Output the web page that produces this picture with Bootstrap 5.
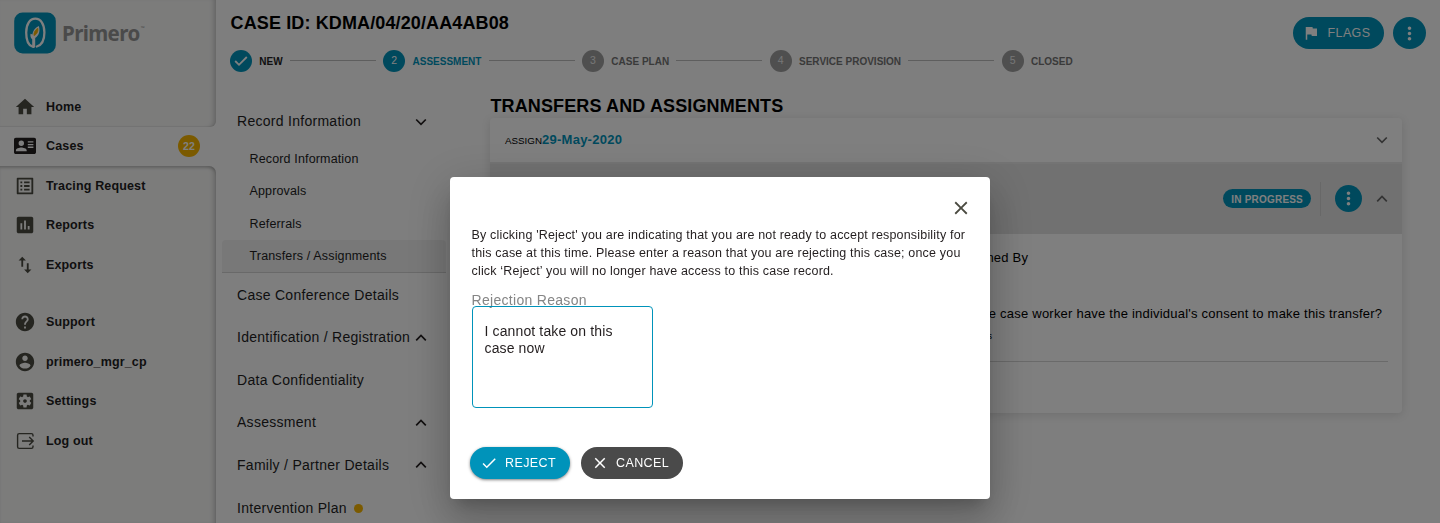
<!DOCTYPE html>
<html lang="en">
<head>
<meta charset="utf-8">
<meta name="viewport" content="width=device-width, initial-scale=1">
<title>Primero - Transfers and Assignments</title>
<link href="https://cdn.jsdelivr.net/npm/bootstrap@5.3.0/dist/css/bootstrap.min.css" rel="stylesheet">
<style>
  :root { --brand: #0093ba; }
  html, body { height: 100%; }
  body { font-family: "Liberation Sans", Arial, sans-serif; background: #fcfcfc; color: #000; overflow: hidden; }
  svg { display: block; flex: none; }
  .ln { fill: none; stroke: currentColor; }

  /* side navigation */
  .side { width: 216px; background: #fdfdfd; font-size: 12.5px; font-weight: 700; letter-spacing: .15px; color: #231e1f; }
  .side-panel { background: #f8f8f7; box-shadow: inset -5px 0 5px -3px rgba(0,0,0,.2); }
  .side-top { height: 127px; border-bottom-right-radius: 6px; box-shadow: inset -5px 0 5px -3px rgba(0,0,0,.2), inset 0 -1px 1px rgba(0,0,0,.06); }
  .side-rest { border-top-right-radius: 7px; box-shadow: inset -5px 0 5px -3px rgba(0,0,0,.2), inset 0 3px 3px -1px rgba(0,0,0,.2); }
  .side-row { height: 39.6px; padding-left: 14px; line-height: 18px; }
  .side-row svg { width: 22px; height: 22px; fill: #4a4a40; color: #4a4a40; margin-right: 10px; }
  .side-cases { height: 39px; padding-bottom: 1px; }
  .brand { padding: 12px 0 0 14px; height: 87px; }
  .brand-word { font: 700 20.5px/42px "Noto Sans", sans-serif; color: #949494; letter-spacing: -.6px; margin-left: 6px; }
  .brand-word sup { font-size: 5px; top: -2.2em; letter-spacing: 0; margin-left: 1px; }
  .count { width: 22px; height: 22px; background: #f7b500; color: #fff; font-size: 10.5px; margin-right: 16px; }

  /* record header */
  .case-title { font-size: 18px; line-height: 22px; letter-spacing: .12px; padding-left: .6px; }
  .steps { gap: 7.3px; font-size: 10px; font-weight: 700; color: #757575; height: 22px; }
  .step-dot { width: 22px; height: 22px; background: #9e9e9e; color: #ededed; font-weight: 400; font-size: 10.5px; flex: none; padding-top: 1px; }
  .step-dot.on { background: var(--brand); color: #fff; }
  .step-line { width: 86px; height: 1px; background: #bdbdbd; }
  .step-name { padding-top: 2px; white-space: nowrap; }
  .pill { background: var(--brand); color: #fff; border-radius: 16px; height: 32px; font-size: 12.5px; letter-spacing: .4px; line-height: 32px; }
  .dots { background: var(--brand); }
  .dots-lg { width: 33px; height: 32px; }
  .dots-sm { width: 27px; height: 27px; }

  /* form navigation */
  .forms { width: 224px; margin-left: 6px; padding-top: 11.5px; font-size: 14px; letter-spacing: .28px; color: #231e1f; }
  .form-row { height: 42.6px; padding: 0 19px 0 15px; white-space: nowrap; }
  .sub-row { height: 32.4px; padding-left: 27.5px; font-size: 12.5px; letter-spacing: .15px; }
  .sub-row.sel { background: #f0f0f0; border-bottom: 1px solid #d2d2d2; border-radius: 4px 4px 0 0; height: 33px; margin-bottom: .5px; }
  .alert-dot { width: 9px; height: 9px; background: #f7b500; margin-left: 7px; }

  /* transitions */
  .content-col { width: 912px; margin-left: 44px; }
  .section-title { font-size: 18px; line-height: 22px; letter-spacing: .13px; margin-top: 5.5px; height: 23.5px; padding-left: .4px; white-space: nowrap; }
  .panels { box-shadow: 0 2px 10px rgba(0,0,0,.12); border-radius: 4px; background: #fff; }
  .panel-a { height: 43.5px; padding: 0 14px 0 15px; font-size: 9.8px; }
  .panel-a b { font-size: 13px; letter-spacing: .25px; color: var(--brand); }
  .panel-h { height: 72px; background: #e2e2e2; padding: 0 14px 0 15px; border-top: 2px solid #e8e8e8; }
  .chip { background: var(--brand); color: #fff; height: 19px; border-radius: 10px; font-size: 10px; letter-spacing: .2px; font-weight: 700; padding: 1px 8px 0; }
  .v-rule { width: 1px; height: 34px; background: #d0d0d0; margin: 0 14px 0 9px; }
  .panel-b { height: 179px; padding: 15px 14px 0 15px; font-size: 13px; line-height: 18px; letter-spacing: .22px; }
  .panel-b .shift { padding-left: 7px; }
  .question { margin-left: -4px; white-space: nowrap; }
  .answer { font-size: 8.5px; margin-left: 17px; line-height: 26px; }
  .panel-b hr { border-top: 1px solid #d4d4d4; opacity: 1; margin: 12px 0 0; }

  /* reject dialog */
  .modal-dialog { width: 540px; max-width: 540px; margin: 177px 0 0 450px; }
  .modal-content { height: 322px; border: 0; border-radius: 4px; padding: 20px 18px 20px 21.5px; color: #231e1f;
    box-shadow: 0 11px 15px -7px rgba(0,0,0,.2), 0 24px 38px 3px rgba(0,0,0,.14), 0 9px 46px 8px rgba(0,0,0,.12); }
  .dialog-text { font-size: 12.5px; line-height: 18px; letter-spacing: .18px; white-space: nowrap; margin-top: 7px; }
  .reason-label { font-size: 14px; letter-spacing: .3px; line-height: 16px; color: #858585; margin-top: 12px; height: 14px; }
  .reason { width: 181px; height: 102px; border: 1px solid var(--brand); border-radius: 4px; padding: 16px 10px 16px 12px; font-size: 14px; line-height: 17px; letter-spacing: .13px; resize: none; color: #231e1f; background: transparent; }
  .act-reject { width: 100px; box-shadow: 0 1px 3px rgba(0,0,0,.5); }
  .act-cancel { width: 102px; background: #4a4a4a; }
  .actions { margin: 39px 0 0 -1.5px; gap: 11px; }
</style>
</head>
<body>
<svg class="d-none">
  <symbol id="dots" viewBox="0 0 24 24"><path fill="#fff" d="M12 8c1.100 0 2-.9 2-2s-.9-2-2-2-2 .9-2 2 .9 2 2 2zm0 2c-1.100 0-2 .9-2 2s.9 2 2 2 2-.9 2-2-.9-2-2-2zm0 6c-1.100 0-2 .9-2 2s.9 2 2 2 2-.9 2-2-.9-2-2-2z"/></symbol>
  <symbol id="up" viewBox="0 0 12 8"><path class="ln" stroke-width="1.700" d="M1.200 6.300 6 1.500l4.800 4.800"/></symbol>
  <symbol id="down" viewBox="0 0 12 8"><path class="ln" stroke-width="1.700" d="M1.200 1.500 6 6.300l4.800-4.800"/></symbol>
</svg>

<div class="d-flex h-100">
  <nav class="side d-flex flex-column h-100">
    <div class="side-panel side-top">
      <div class="brand d-flex">
        <svg width="42" height="42" viewBox="0 0 42 42"><rect x=".2" y=".5" width="41.600" height="41" rx="8.500" fill="#0093ba"/>
          <path d="M18.300 34.500C13.800 33 12.200 27.500 12.200 20.500 12.200 12 16 6.700 21.300 6.700S30.400 12 30.400 20.500c0 7.500-2.600 12.500-7.600 14" fill="none" stroke="#fff" stroke-width="2.300" stroke-linecap="round"/>
          <path d="M18.200 35.500v-8.300c-1.600-1.200-2-3.200-1.700-5.500l2 .9c.2-3.800 2.700-7 6.300-8.600 1.700 4.800.2 9.800-3.600 12v8.700c-.5 1.200-2 1.700-3 .8z" fill="#fff"/>
          <path d="M20 23.600c-.4-3 1-5.600 3.800-7.300.6 3.200-.8 6-3.800 7.300z" fill="#f7b500" stroke="#f7b500" stroke-width=".8"/></svg>
        <span class="brand-word">Primero<sup>™</sup></span>
      </div>
      <div class="side-row d-flex align-items-center"><svg viewBox="0 0 24 24"><path d="M10 20v-6h4v6h5v-8h3L12 3 2 12h3v8z"/></svg>Home</div>
    </div>
    <div class="side-row side-cases d-flex align-items-center">
      <svg viewBox="0 0 22 22" style="fill:#231e1f"><path fill-rule="evenodd" d="M1.800 2.800h18.400c1 0 1.800.8 1.800 1.800v12.700c0 1-.8 1.800-1.800 1.800H1.800c-1 0-1.800-.8-1.800-1.800V4.600c0-1 .8-1.800 1.800-1.800zM7.300 5.500a2.700 2.700 0 1 0 0 5.400 2.700 2.700 0 0 0 0-5.400zM1.900 16.300h10.800v-.9c0-1.800-3.600-2.800-5.400-2.800s-5.400 1-5.400 2.800zM13.800 6.200v1.400h5.600V6.200zm0 2.700v1.400h5.600V8.900zm0 2.700V13h5.600v-1.400z"/></svg>
      Cases<span class="count rounded-circle d-flex align-items-center justify-content-center ms-auto">22</span>
    </div>
    <div class="side-panel side-rest flex-grow-1">
      <div class="side-row d-flex align-items-center"><svg viewBox="0 0 24 24"><path d="M19 5v14H5V5h14m1.100-2H3.900c-.5 0-.9.4-.9.9v16.200c0 .4.4.9.9.9h16.200c.4 0 .9-.5.9-.9V3.900c0-.5-.5-.9-.9-.9zM11 7h6v2h-6V7zm0 4h6v2h-6v-2zm0 4h6v2h-6zM7 7h2v2H7zm0 4h2v2H7zm0 4h2v2H7z"/></svg>Tracing Request</div>
      <div class="side-row d-flex align-items-center"><svg viewBox="0 0 24 24"><path d="M19 3H5c-1.100 0-2 .9-2 2v14c0 1.100.9 2 2 2h14c1.100 0 2-.9 2-2V5c0-1.100-.9-2-2-2zM9 17H7v-7h2v7zm4 0h-2V7h2v10zm4 0h-2v-4h2v4z"/></svg>Reports</div>
      <div class="side-row d-flex align-items-center"><svg viewBox="0 0 24 24"><path d="M16 17.010V10h-2v7.010h-3L15 21l4-3.990h-3zM9 3L5 6.990h3V14h2V6.990h3L9 3z"/></svg>Exports</div>
      <div class="side-row d-flex align-items-center" style="margin-top:17.500px"><svg viewBox="0 0 24 24"><path d="M12 2C6.480 2 2 6.480 2 12s4.480 10 10 10 10-4.480 10-10S17.520 2 12 2zm1 17h-2v-2h2v2zm2.070-7.750l-.9.920C13.450 12.900 13 13.500 13 15h-2v-.5c0-1.100.45-2.100 1.170-2.830l1.240-1.260c.37-.36.59-.86.59-1.410 0-1.100-.9-2-2-2s-2 .9-2 2H8c0-2.210 1.790-4 4-4s4 1.790 4 4c0 .88-.36 1.680-.93 2.250z"/></svg>Support</div>
      <div class="side-row d-flex align-items-center"><svg viewBox="0 0 24 24"><path d="M12 2C6.480 2 2 6.480 2 12s4.480 10 10 10 10-4.480 10-10S17.520 2 12 2zm0 3c1.660 0 3 1.340 3 3s-1.340 3-3 3-3-1.340-3-3 1.340-3 3-3zm0 14.200c-2.500 0-4.710-1.280-6-3.220.03-1.990 4-3.080 6-3.080 1.990 0 5.970 1.090 6 3.080-1.290 1.940-3.500 3.220-6 3.220z"/></svg>primero_mgr_cp</div>
      <div class="side-row d-flex align-items-center"><svg viewBox="0 0 24 24"><path d="M12 10c-1.100 0-2 .9-2 2s.9 2 2 2 2-.9 2-2-.9-2-2-2zm7-7H5c-1.110 0-2 .9-2 2v14c0 1.100.89 2 2 2h14c1.110 0 2-.9 2-2V5c0-1.100-.89-2-2-2zm-1.750 9c0 .23-.02.46-.05.68l1.480 1.160c.13.11.17.3.08.45l-1.400 2.420c-.09.15-.27.21-.43.15l-1.740-.7c-.36.28-.76.51-1.180.69l-.26 1.850c-.03.17-.18.3-.35.3h-2.800c-.17 0-.32-.13-.35-.29l-.26-1.850c-.43-.18-.82-.41-1.180-.69l-1.740.7c-.16.06-.34 0-.43-.15l-1.400-2.420c-.09-.15-.05-.34.08-.45l1.480-1.160c-.03-.23-.05-.46-.05-.69 0-.23.02-.46.05-.68l-1.480-1.160c-.13-.11-.17-.3-.08-.45l1.400-2.420c.09-.15.27-.21.43-.15l1.740.7c.36-.28.76-.51 1.180-.69l.26-1.850c.03-.17.18-.3.35-.3h2.800c.17 0 .32.13.35.29l.26 1.850c.43.18.82.41 1.180.69l1.740-.7c.16-.06.34 0 .43.15l1.400 2.420c.09.15.05.34-.08.45l-1.480 1.160c.03.23.05.46.05.69z"/></svg>Settings</div>
      <div class="side-row d-flex align-items-center"><svg viewBox="0 0 22 22"><g class="ln" stroke-width="1.400"><path d="M19 6.500V5.200c0-1-.6-1.600-1.600-1.600H5.200c-1 0-1.600.6-1.600 1.600v11.600c0 1 .6 1.600 1.600 1.600h12.200c1 0 1.600-.6 1.600-1.600v-1.300M8 11h10.500M15.200 7l4 4-4 4"/></g></svg>Log out</div>
    </div>
  </nav>

  <main class="flex-grow-1 d-flex flex-column">
    <header class="d-flex justify-content-between flex-shrink-0" style="height:89px">
      <div style="padding:12px 0 0 14px">
        <h1 class="case-title fw-bold mb-0">CASE ID: KDMA/04/20/AA4AB08</h1>
        <div class="steps d-flex align-items-center" style="margin-top:15.500px">
          <span class="step-dot on rounded-circle d-flex align-items-center justify-content-center"><svg width="14" height="12" viewBox="0 0 14 12"><path class="ln" stroke-width="1.800" d="M1.200 6 5 9.800 12.800 2"/></svg></span>
          <span class="step-name" style="color:#231e1f">NEW</span><span class="step-line"></span>
          <span class="step-dot on rounded-circle d-flex align-items-center justify-content-center">2</span>
          <span class="step-name" style="color:var(--brand)">ASSESSMENT</span><span class="step-line"></span>
          <span class="step-dot rounded-circle d-flex align-items-center justify-content-center">3</span>
          <span class="step-name">CASE PLAN</span><span class="step-line"></span>
          <span class="step-dot rounded-circle d-flex align-items-center justify-content-center">4</span>
          <span class="step-name">SERVICE PROVISION</span><span class="step-line"></span>
          <span class="step-dot rounded-circle d-flex align-items-center justify-content-center">5</span>
          <span class="step-name">CLOSED</span>
        </div>
      </div>
      <div class="d-flex" style="padding:17px 14px 0 0;gap:9px">
        <span class="pill d-flex align-items-center" style="width:91px;padding-left:9px"><svg width="18" height="18" viewBox="0 0 24 24" style="margin-right:7.500px"><path fill="#fff" d="M14.400 6L14 4H5v17h2v-7h5.600l.4 2h7V6z"/></svg>FLAGS</span>
        <span class="dots dots-lg rounded-circle d-flex align-items-center justify-content-center"><svg width="21" height="21"><use href="#dots"/></svg></span>
      </div>
    </header>

    <div class="d-flex">
      <aside class="forms flex-shrink-0">
        <div class="form-row d-flex align-items-center justify-content-between">Record Information<svg width="12" height="8"><use href="#down"/></svg></div>
        <div class="sub-row d-flex align-items-center">Record Information</div>
        <div class="sub-row d-flex align-items-center">Approvals</div>
        <div class="sub-row d-flex align-items-center">Referrals</div>
        <div class="sub-row sel d-flex align-items-center">Transfers / Assignments</div>
        <div class="form-row d-flex align-items-center">Case Conference Details</div>
        <div class="form-row d-flex align-items-center justify-content-between">Identification / Registration<svg width="12" height="8"><use href="#up"/></svg></div>
        <div class="form-row d-flex align-items-center">Data Confidentiality</div>
        <div class="form-row d-flex align-items-center justify-content-between">Assessment<svg width="12" height="8"><use href="#up"/></svg></div>
        <div class="form-row d-flex align-items-center justify-content-between">Family / Partner Details<svg width="12" height="8"><use href="#up"/></svg></div>
        <div class="form-row d-flex align-items-center">Intervention Plan<span class="alert-dot rounded-circle"></span></div>
      </aside>

      <section class="content-col flex-shrink-0">
        <h2 class="section-title fw-bold mb-0">TRANSFERS AND ASSIGNMENTS</h2>
        <div class="panels">
          <div class="panel-a d-flex align-items-center"><div style="margin-top:-1px">ASSIGN<b>29-May-2020</b></div><svg class="ms-auto" width="12" height="8" style="color:#666"><use href="#down"/></svg></div>
          <div class="panel-h d-flex align-items-center">
            <span class="chip ms-auto d-flex align-items-center">IN PROGRESS</span>
            <span class="v-rule"></span>
            <span class="dots dots-sm rounded-circle d-flex align-items-center justify-content-center"><svg width="21" height="21"><use href="#dots"/></svg></span>
            <svg width="12" height="8" style="color:#666;margin-left:14px"><use href="#up"/></svg>
          </div>
          <div class="panel-b">
            <div class="row g-0"><div class="col-6 offset-6 shift">Assigned By</div></div>
            <div class="row g-0" style="margin-top:38px"><div class="col-6 offset-6"><div class="question">Does the case worker have the individual's consent to make this transfer?</div><div class="d-flex"><span class="answer">Access</span></div></div></div>
            <hr>
          </div>
        </div>
      </section>
    </div>
  </main>
</div>

<div class="modal-backdrop show"></div>
<div class="modal d-block" tabindex="-1" role="dialog">
  <div class="modal-dialog">
    <div class="modal-content">
      <svg class="align-self-end" width="22" height="22" viewBox="0 0 24 24" style="color:#4a4a40"><path fill="currentColor" d="M19 6.410L17.590 5 12 10.590 6.410 5 5 6.410 10.590 12 5 17.590 6.410 19 12 13.410 17.590 19 19 17.590 13.410 12z"/></svg>
      <p class="dialog-text mb-0">By clicking 'Reject' you are indicating that you are not ready to accept responsibility for<br>this case at this time. Please enter a reason that you are rejecting this case; once you<br>click ‘Reject’ you will no longer have access to this case record.</p>
      <label class="reason-label" for="reason">Rejection Reason</label>
      <textarea class="reason" id="reason" spellcheck="false">I cannot take on this case now</textarea>
      <div class="actions d-flex">
        <button class="pill act-reject border-0 d-flex align-items-center p-0"><svg width="18" height="18" viewBox="0 0 24 24" style="margin:0 7px 0 10px"><path fill="#fff" d="M9 16.200L4.800 12l-1.400 1.400L9 19 21 7l-1.400-1.400L9 16.200z"/></svg>REJECT</button>
        <button class="pill act-cancel border-0 d-flex align-items-center p-0"><svg width="18" height="18" viewBox="0 0 24 24" style="margin:0 7px 0 10px"><path fill="#fff" d="M19 6.410L17.590 5 12 10.590 6.410 5 5 6.410 10.590 12 5 17.590 6.410 19 12 13.410 17.590 19 19 17.590 13.410 12z"/></svg>CANCEL</button>
      </div>
    </div>
  </div>
</div>
<script src="https://cdn.jsdelivr.net/npm/bootstrap@5.3.0/dist/js/bootstrap.bundle.min.js"></script>
</body>
</html>
